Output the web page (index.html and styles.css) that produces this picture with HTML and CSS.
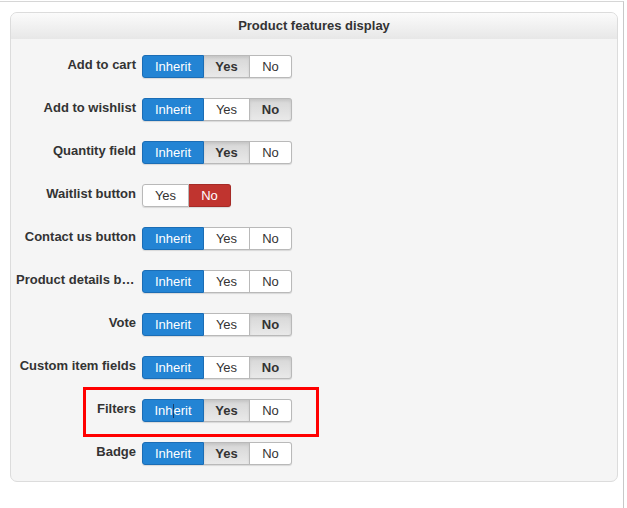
FILE: index.html
```html
<!DOCTYPE html>
<html>
<head>
<meta charset="utf-8">
<link rel="stylesheet" href="styles.css">
</head>
<body>
<div class="page">
  <div class="panel">
    <div class="panel-head">Product features display</div>
    <div class="panel-body">
      <div class="row">
        <div class="label">Add to cart</div>
        <div class="group"><span class="btn btn-inherit on-blue">Inherit</span><span class="btn btn-yes on-gray">Yes</span><span class="btn btn-no">No</span></div>
      </div>
      <div class="row">
        <div class="label">Add to wishlist</div>
        <div class="group"><span class="btn btn-inherit on-blue">Inherit</span><span class="btn btn-yes">Yes</span><span class="btn btn-no on-gray">No</span></div>
      </div>
      <div class="row">
        <div class="label">Quantity field</div>
        <div class="group"><span class="btn btn-inherit on-blue">Inherit</span><span class="btn btn-yes on-gray">Yes</span><span class="btn btn-no">No</span></div>
      </div>
      <div class="row">
        <div class="label">Waitlist button</div>
        <div class="group"><span class="btn btn-yes2">Yes</span><span class="btn btn-no on-red">No</span></div>
      </div>
      <div class="row">
        <div class="label">Contact us button</div>
        <div class="group"><span class="btn btn-inherit on-blue">Inherit</span><span class="btn btn-yes">Yes</span><span class="btn btn-no">No</span></div>
      </div>
      <div class="row">
        <div class="label">Product details button</div>
        <div class="group"><span class="btn btn-inherit on-blue">Inherit</span><span class="btn btn-yes">Yes</span><span class="btn btn-no">No</span></div>
      </div>
      <div class="row">
        <div class="label">Vote</div>
        <div class="group"><span class="btn btn-inherit on-blue">Inherit</span><span class="btn btn-yes">Yes</span><span class="btn btn-no on-gray">No</span></div>
      </div>
      <div class="row">
        <div class="label">Custom item fields</div>
        <div class="group"><span class="btn btn-inherit on-blue">Inherit</span><span class="btn btn-yes">Yes</span><span class="btn btn-no on-gray">No</span></div>
      </div>
      <div class="row highlighted">
        <div class="label">Filters</div>
        <div class="group"><span class="btn btn-inherit on-blue">Inh<span class="caret"></span>erit</span><span class="btn btn-yes on-gray">Yes</span><span class="btn btn-no">No</span></div>
        <div class="highlight"></div>
      </div>
      <div class="row">
        <div class="label">Badge</div>
        <div class="group"><span class="btn btn-inherit on-blue">Inherit</span><span class="btn btn-yes on-gray">Yes</span><span class="btn btn-no">No</span></div>
      </div>
    </div>
  </div>
</div>
</body>
</html>
```
FILE: styles.css
```css
html, body {
  margin: 0;
  padding: 0;
  background: #ffffff;
}
body {
  font-family: "Liberation Sans", Arial, sans-serif;
  color: #333333;
}
.page {
  width: 624px;
  height: 507px;
  margin-top: 1px;
  border-top: 1px solid #d6d6d6;
  border-right: 1px solid #c8c8c8;
  padding: 10px 5px 0 10px;
  box-sizing: border-box;
}
.panel {
  border: 1px solid #dcdcdc;
  border-radius: 7px;
  background: #f5f5f5;
  overflow: hidden;
}
.panel-head {
  height: 26px;
  line-height: 26px;
  text-align: center;
  font-size: 13px;
  font-weight: bold;
  color: #333333;
  background: linear-gradient(#fbfbfb, #e7e7e7);
}
.panel-body {
  padding: 16px 0 16px 5px;
  display: flex;
  flex-direction: column;
  gap: 20px;
}
.row {
  display: flex;
  align-items: flex-start;
  position: relative;
}
.label {
  width: 120px;
  padding-right: 6px;
  text-align: right;
  font-size: 13px;
  font-weight: bold;
  line-height: 18px;
  padding-top: 1px;
  white-space: nowrap;
  overflow: hidden;
  text-overflow: ellipsis;
  color: #333333;
}
.group {
  display: flex;
  height: 23px;
  border-radius: 3px;
  box-shadow: 0 1px 1px rgba(0,0,0,0.12);
}
.btn {
  box-sizing: border-box;
  height: 23px;
  line-height: 21px;
  font-size: 13px;
  text-align: center;
  background: #ffffff;
  color: #333333;
  border: 1px solid #b9b9b9;
  border-left-width: 0;
}
.btn:first-child {
  border-left-width: 1px;
  border-radius: 3px 0 0 3px;
}
.btn:last-child {
  border-radius: 0 3px 3px 0;
}
.btn-inherit { width: 62px; }
.btn-yes { width: 46px; }
.btn-no { width: 42px; }
.btn-yes2 { width: 47px; }
.on-blue {
  background: #2384d4;
  border-color: #1b6db5;
  color: #ffffff;
}
.on-gray {
  background: linear-gradient(#d6d6d6, #e9e9e9);
  box-shadow: inset 0 2px 3px rgba(0,0,0,0.08);
  font-weight: bold;
  color: #333333;
}
.on-red {
  background: #c0342f;
  border-color: #a52b27;
  color: #ffffff;
}
.caret {
  display: inline-block;
  width: 1px;
  height: 14px;
  background: #1a3f66;
  vertical-align: -3px;
}
.highlight {
  position: absolute;
  left: 67px;
  top: -12px;
  width: 236px;
  height: 50px;
  box-sizing: border-box;
  border: 3px solid #ff0000;
}
```
